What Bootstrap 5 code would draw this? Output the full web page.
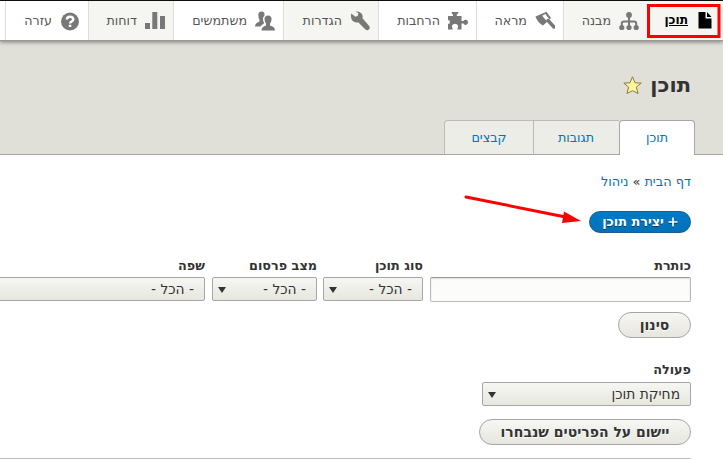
<!DOCTYPE html>
<html lang="he" dir="rtl">
<head>
<meta charset="utf-8">
<title>תוכן</title>
<link href="https://cdn.jsdelivr.net/npm/bootstrap@5.3.0/dist/css/bootstrap.min.css" rel="stylesheet">
<style>
body{font-family:"DejaVu Sans","Noto Sans",sans-serif;font-size:12.9px;line-height:20px;color:#333;background:#fff;width:723px;height:460px}
a{color:#0074bd;text-decoration:none}
.admin-bar{height:41px;border-top:1px solid #0f0f0f;border-bottom:1px solid #999;box-shadow:0 1px 4px #777;z-index:2}
.admin-bar .nav-link{height:39px;padding:0 8px 0 0;gap:8px;color:#565656;border-left:1px solid #ddd;line-height:39px;font-size:12.7px}
.admin-bar svg{width:20px;height:20px;fill:#787878;flex:none}
.shade{background:#f5f5f2}
.admin-bar .current{color:#000;font-weight:700;font-size:12.2px;border-left:0;gap:7px}
.admin-bar .current span{text-decoration:underline}
.admin-bar .current svg{fill:#000;margin-top:-1px}
.w1{width:76px}.w2{width:84px}.w3{width:87px}.w4{width:98px}.w5{width:95px}.w6{width:110px}.w7{width:85px}.w8{width:83px}
.page-head{height:114px;background:#e0e0d8;border-bottom:1px solid #a6a6a6;padding:31px 32px 0 0}
.page-head h1{font-size:21px;line-height:26px;font-weight:700;margin:0}
.page-tabs{margin:22px -4px 0 0;height:35px}
.page-tabs a{height:34px;line-height:34px;text-align:center;background:#ecede7;border:1px solid #bbb;border-bottom:0;border-right:0;font-size:12.7px}
.page-tabs .sel{width:76px;height:35px;background:#fff;border:1px solid #a6a6a6;border-bottom:0;border-radius:4px 4px 0 0}
.page-tabs .t2{width:86px;border-left:0;margin-left:-1px}.page-tabs .t3{width:90px;border-radius:4px 0 0 0;border-right:1px solid #bbb}
main{padding:17px 32px 0 0}
.crumbs{line-height:20px}
.add-link{gap:4px;margin-top:19px;width:102px;height:22px;line-height:20px;border-radius:11px;border:1px solid #1e5c90;background:linear-gradient(#007bc6,#0071b8);color:#fff;font-weight:700;font-size:12.8px;text-shadow:0 1px rgba(0,0,0,.5)}
.add-link svg{filter:drop-shadow(0 1px rgba(0,0,0,.5))}
.lbl{font-weight:700;line-height:20px;height:21px;font-size:12.8px;display:block}
.pick{height:24px;border:1px solid #a6a6a6;border-radius:2px;background:linear-gradient(#f6f6f3,#e7e7df);line-height:22px;padding:0 10px 0 5px;font-size:13.8px}
.pick i{border:4.5px solid transparent;border-top:6px solid #333;border-bottom:0;margin-top:1px}
.entry{width:261px;height:25px;border:1px solid #b8b8b8;border-top-color:#999;border-radius:2px;background:#fcfcfa;box-shadow:inset 0 1px 2px rgba(0,0,0,.12);display:block}
.act{height:26px;border:1px solid #a6a6a6;border-radius:13px;background:linear-gradient(#f6f6f3,#e7e7df);font-weight:700;font-size:14px;line-height:23px;color:#333;padding:0;display:block;text-shadow:0 1px #fff}
.filters{margin-top:23px;gap:7px}
.fa,.fb,.fc,.fd{flex:none}
.fb{width:100px;margin-left:-1px}.fc{width:105px}.fd{width:230px}
.b1{width:73px;margin-top:10px}
.ops{width:209px;margin-top:22px}
.ops .lbl{height:22px}
.b2{width:212px;margin-top:13px}
.rule{height:1px;background:#bebfb9;margin-top:13px}
.notes{left:0;top:0;z-index:5;pointer-events:none}
</style>
<script src="https://cdn.jsdelivr.net/npm/bootstrap@5.3.0/dist/js/bootstrap.bundle.min.js"></script>
</head>
<body class="position-relative overflow-hidden">
<nav class="admin-bar nav flex-nowrap bg-white position-relative">
<a class="nav-link d-flex align-items-center w1 shade current" href="#"><svg viewBox="0 0 20 20"><path d="M3.500 2h7v6.500h6V18.500h-13zM12 2l4.500 5h-4.500z"/></svg><span>תוכן</span></a>
<a class="nav-link d-flex align-items-center w2 shade" href="#"><svg viewBox="0 0 20 20"><circle cx="10" cy="4" r="2.900"/><circle cx="2.800" cy="16.500" r="2.600"/><circle cx="10" cy="16.500" r="2.600"/><circle cx="17.200" cy="16.500" r="2.600"/><path d="M2.800 16v-3.500q0-2 2-2h10.400q2 0 2 2V16M10 4v12" fill="none" stroke="#787878" stroke-width="2"/></svg><span>מבנה</span></a>
<a class="nav-link d-flex align-items-center w3" href="#"><svg viewBox="0 0 20 20"><path d="M11.500.8L.5 5.500q2 6 7.500 9l8-7.500z"/><path d="M10.300 3L7.200 4.800l5.300 6.200 2-2.500z" fill="#fff"/><path d="M13 9.500l6 6.500" fill="none" stroke="#787878" stroke-width="3.400" stroke-linecap="round"/></svg><span>מראה</span></a>
<a class="nav-link d-flex align-items-center w4" href="#"><svg viewBox="0 0 20 20"><path d="M0 5h5V3.500Q3.500 3 3.500 1H10.500Q10.500 3 8.700 3.500V5H13.500v5h2q.5-1.500 2.500-1.300 2 .3 2 2.600t-2 2.600q-2 .2-2.500-1.400h-2V18.500H9.500v-1.500q1-1 .5-2.500-1-1.800-3-1.800t-3 1.800q-.5 1.500.5 2.500v1.500H0v-5.500q2-.2 2-2T0 9z"/></svg><span>הרחבות</span></a>
<a class="nav-link d-flex align-items-center w5 shade" href="#"><svg viewBox="0 0 20 20"><path d="M1.200 2.500l4.300 3.300 2.300-1L8.300 2 5.500.8q3.500-1 6 1.700 1.700 2 1 4.700l6.700 7.800q1.200 2-.3 3.500-1.700 1.400-3.500 0l-7.200-7.300q-3.200.8-5.500-1.200Q.3 7.500 1.200 2.500z"/></svg><span>הגדרות</span></a>
<a class="nav-link d-flex align-items-center w6" href="#"><svg viewBox="0 0 20 20"><path d="M6.500.5q3.500 0 3 4-2 1.500-1.500 4.500.3 2 1.300 3l-3 2.500-.8 1H0q0-3 2.500-4l2-1V9Q3.300 6.500 3.300 4q0-3.500 3.200-3.500z"/><path d="M13 4.500q4 0 3.500 4.500-.3 2-1.500 3.800v1.700l3 1.200q2 1 2 3.800H6.500q0-3 2.300-4l2.200-1v-1.700Q9.500 10.500 9.500 8q0-3.500 3.500-3.500z"/></svg><span>משתמשים</span></a>
<a class="nav-link d-flex align-items-center w7 shade" href="#"><svg viewBox="0 0 20 20"><path d="M0 12h5v6H0zM7.300 1h5v17h-5zM15 5h5v13h-5z"/></svg><span>דוחות</span></a>
<a class="nav-link d-flex align-items-center w8" href="#"><svg viewBox="0 0 20 20"><circle cx="10" cy="10.500" r="9"/><path d="M6.800 8.500Q7 5.700 10 5.700t3.300 2.500q0 1.300-1.500 2.100-1.700.8-1.700 2.200" fill="none" stroke="#fff" stroke-width="2.500"/><path d="M8.800 13.700h2.500V16H8.800z" fill="#fff"/></svg><span>עזרה</span></a>
</nav>
<header class="page-head">
<div class="d-flex align-items-center gap-2"><h1>תוכן</h1><svg width="19" height="19" viewBox="0 0 19 19"><path d="M9.500.8l2.500 6 6.200.3-4.900 4 1.800 6.400-5.600-2.800-5.600 2.800 1.800-6.400L.8 7.100 7 6.800z" fill="#fff7a0" stroke="#8a7a3c" stroke-linejoin="round"/></svg></div>
<div class="page-tabs d-flex align-items-start"><a class="sel" href="#">תוכן</a><a class="t2" href="#">תגובות</a><a class="t3" href="#">קבצים</a></div>
</header>
<main>
<div class="crumbs"><a href="#">דף הבית</a> » <a href="#">ניהול</a></div>
<div class="d-flex"><a class="add-link d-flex align-items-center justify-content-center" href="#"><svg width="10" height="10" viewBox="0 0 10 10"><path d="M5 .5v9M.5 5h9" stroke="#fff" stroke-width="1.700"/></svg><span>יצירת תוכן</span></a></div>
<div class="filters d-flex">
<div class="fa"><label class="lbl" for="ttl">כותרת</label><input id="ttl" class="entry"></div>
<div class="fb"><span class="lbl">סוג תוכן</span><div class="pick d-flex justify-content-between align-items-center"><span>- הכל -</span><i></i></div></div>
<div class="fc"><span class="lbl">מצב פרסום</span><div class="pick d-flex justify-content-between align-items-center"><span>- הכל -</span><i></i></div></div>
<div class="fd"><span class="lbl">שפה</span><div class="pick d-flex align-items-center"><span>- הכל -</span></div></div>
</div>
<button class="act b1" type="button">סינון</button>
<div class="ops"><span class="lbl">פעולה</span><div class="pick d-flex justify-content-between align-items-center"><span>מחיקת תוכן</span><i></i></div></div>
<button class="act b2" type="button">יישום על הפריטים שנבחרו</button>
<div class="rule"></div>
</main>
<svg class="notes position-absolute" width="723" height="460"><rect x="648.500" y="5.500" width="70.500" height="31" fill="none" stroke="#f00" stroke-width="3"/><path d="M466 197l102 20.500" stroke="#f00" stroke-width="3" stroke-linecap="round"/><path d="M581 221l-17-9.500-2 11.500z" fill="#f00"/></svg>
</body>
</html>
